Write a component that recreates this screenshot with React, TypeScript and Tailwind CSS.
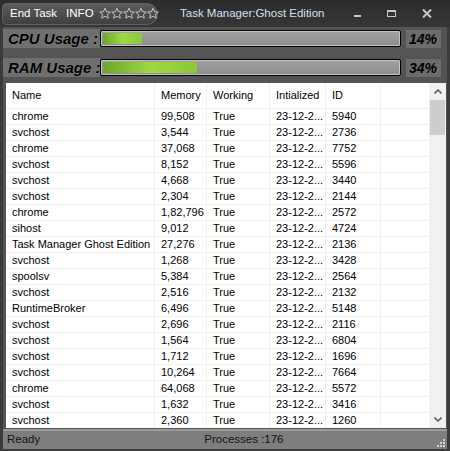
import type { ReactNode } from 'react'

const ROWS: [string, string, string][] = [
  ['chrome', '99,508', '5940'],
  ['svchost', '3,544', '2736'],
  ['chrome', '37,068', '7752'],
  ['svchost', '8,152', '5596'],
  ['svchost', '4,668', '3440'],
  ['svchost', '2,304', '2144'],
  ['chrome', '1,82,796', '2572'],
  ['sihost', '9,012', '4724'],
  ['Task Manager Ghost Edition', '27,276', '2136'],
  ['svchost', '1,268', '3428'],
  ['spoolsv', '5,384', '2564'],
  ['svchost', '2,516', '2132'],
  ['RuntimeBroker', '6,496', '5148'],
  ['svchost', '2,696', '2116'],
  ['svchost', '1,564', '6804'],
  ['svchost', '1,712', '1696'],
  ['svchost', '10,264', '7664'],
  ['chrome', '64,068', '5572'],
  ['svchost', '1,632', '3416'],
  ['svchost', '2,360', '1260'],
]

function Star() {
  return (
    <svg width="12" height="13" viewBox="0 0 24 24" className="shrink-0">
      <path
        d="M12 1.5l3.1 7 7.4.6-5.6 4.9 1.7 7.4-6.6-3.9-6.6 3.9 1.7-7.4L1.5 9.1l7.4-.6z"
        fill="none"
        stroke="#c9d3dc"
        strokeWidth="1.8"
        strokeLinejoin="round"
      />
    </svg>
  )
}

function UsageRow({ label, pct }: { label: string; pct: number }) {
  return (
    <div className="flex items-center h-[19px]">
      <div className="w-[97px] h-[19px] bg-[#6f6f6f] flex items-center pl-[5px] text-[15px] font-bold italic text-black leading-none whitespace-nowrap [text-shadow:0_0_1px_#9a9a9a]">
        {label}
      </div>
      <div className="w-[301px] h-[17px] border border-black rounded-[2px] bg-gradient-to-b from-[#a3a3a3] to-[#8b8b8b] shadow-[inset_0_0_0_1px_#c4c4c4] p-[2px]">
        <div className="h-full bg-gradient-to-r from-[#6aa628] via-[#9fd845] to-[#8cc63a]" style={{ width: `${pct * 0.94}%` }} />
      </div>
      <div className="ml-[5px] w-[35px] h-[18px] bg-[#6c6c6c] flex items-center justify-end pr-[4px] text-[14px] font-bold italic text-black leading-none">
        {pct}%
      </div>
    </div>
  )
}

function Cell({ w, children, last }: { w: string; children?: ReactNode; last?: boolean }) {
  return (
    <div className={`${w} shrink-0 h-full flex items-center pl-[6px] whitespace-nowrap overflow-hidden ${last ? '' : 'border-r border-[#f0f0f0]'}`}>
      {children}
    </div>
  )
}

export default function App() {
  return (
    <div className="w-[450px] h-[451px] bg-[#3b3b3b] flex flex-col overflow-hidden text-[11px]" style={{ fontFamily: '"Liberation Sans", Arial, sans-serif' }}>
      {/* title bar */}
      <div className="h-[27px] shrink-0 flex items-center bg-gradient-to-b from-[#2c2c2c] to-[#363636] relative">
        <div className="ml-[2px] h-[22px] w-[156px] rounded-r-[11px] rounded-l-[4px] bg-gradient-to-b from-[#5c5c5c] to-[#3f3f3f] border border-[#5e5e5e] flex items-center pl-[7px] text-white text-[11.5px] whitespace-nowrap">
          <span>End Task</span>
          <span className="ml-[9px]">INFO</span>
          <div className="ml-[5px] flex">
            <Star />
            <Star />
            <Star />
            <Star />
            <Star />
          </div>
        </div>
        <div className="ml-[22px] text-[#cfe0f2] text-[11.5px] whitespace-nowrap">Task Manager:Ghost Edition</div>
        <div className="ml-auto mr-[18px] flex items-center gap-[26px] text-[#c8c8c8]">
          <div className="w-[7px] h-[2px] bg-[#c8c8c8] mt-[5px]" />
          <div className="w-[9px] h-[7px] border border-[#c8c8c8] border-t-2" />
          <svg width="10" height="9" viewBox="0 0 10 9">
            <path d="M1 0.5L9 8.5M9 0.5L1 8.5" stroke="#c8c8c8" strokeWidth="2" />
          </svg>
        </div>
      </div>

      {/* body */}
      <div className="flex-1 mx-[3px] mb-[4px] bg-[#545454] flex flex-col">
        <div className="pt-[2px] flex flex-col gap-[10px]">
          <UsageRow label="CPU Usage :" pct={14} />
          <UsageRow label="RAM Usage :" pct={34} />
        </div>

        {/* list */}
        <div className="mt-[6px] ml-[3px] mr-[1px] h-[345px] bg-white flex text-black">
          <div className="flex-1 flex flex-col">
            <div className="h-[25px] shrink-0 flex">
              <Cell w="w-[149px]">Name</Cell>
              <Cell w="w-[52px]">Memory</Cell>
              <Cell w="w-[63px]">Working</Cell>
              <Cell w="w-[56px]">Intialized</Cell>
              <Cell w="w-[55px]">ID</Cell>
            </div>
            {ROWS.map(([name, mem, id], i) => (
              <div key={i} className="h-[16px] shrink-0 flex border-t border-[#f0f0f0]">
                <Cell w="w-[149px]">{name}</Cell>
                <Cell w="w-[52px]">{mem}</Cell>
                <Cell w="w-[63px]">True</Cell>
                <Cell w="w-[56px]">23-12-2...</Cell>
                <Cell w="w-[55px]">{id}</Cell>
              </div>
            ))}
          </div>
          {/* scrollbar */}
          <div className="w-[17px] shrink-0 bg-[#f0f0f0] flex flex-col">
            <div className="h-[17px] flex items-center justify-center">
              <svg width="8" height="5" viewBox="0 0 8 5">
                <path d="M0.5 4.5L4 1L7.5 4.5" fill="none" stroke="#606060" strokeWidth="1.6" />
              </svg>
            </div>
            <div className="mx-[1px] h-[35px] bg-[#cdcdcd]" />
            <div className="flex-1" />
            <div className="h-[17px] flex items-center justify-center">
              <svg width="8" height="5" viewBox="0 0 8 5">
                <path d="M0.5 0.5L4 4L7.5 0.5" fill="none" stroke="#606060" strokeWidth="1.6" />
              </svg>
            </div>
          </div>
        </div>

        {/* status bar */}
        <div className="mt-[1px] h-[20px] flex items-center bg-[#7e7e7e] border-t-2 border-[#9a9a9a] text-[#141414] text-[11.5px] relative">
          <span className="ml-[4px]">Ready</span>
          <span className="ml-[164px]">Processes :176</span>
          <div className="absolute right-[2px] bottom-[2px] grid grid-cols-3 gap-[1px]">
            <span />
            <span />
            <span className="w-[2px] h-[2px] bg-[#d0d0d0]" />
            <span />
            <span className="w-[2px] h-[2px] bg-[#d0d0d0]" />
            <span className="w-[2px] h-[2px] bg-[#d0d0d0]" />
            <span className="w-[2px] h-[2px] bg-[#d0d0d0]" />
            <span className="w-[2px] h-[2px] bg-[#d0d0d0]" />
            <span className="w-[2px] h-[2px] bg-[#d0d0d0]" />
          </div>
        </div>
      </div>
    </div>
  )
}
